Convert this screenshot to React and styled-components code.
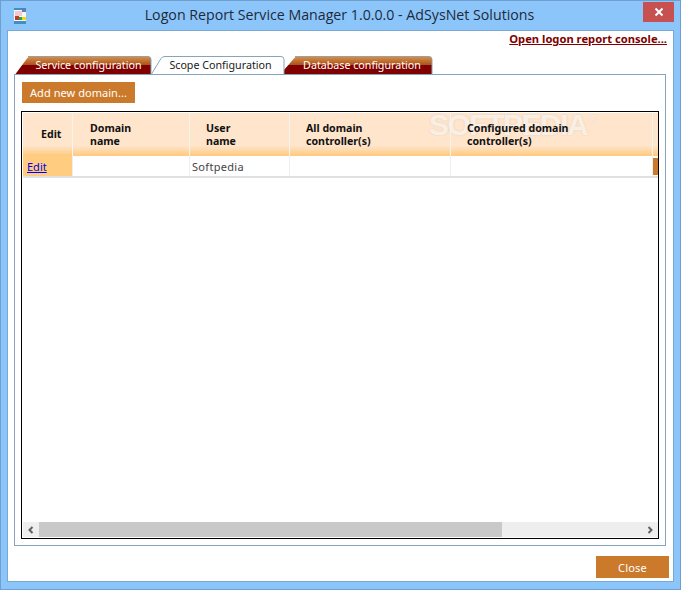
import React from 'react';
import styled, { createGlobalStyle } from 'styled-components';

const Global = createGlobalStyle`
  html, body {
    margin: 0;
    padding: 0;
    background: #8cc5fa;
  }
  * {
    box-sizing: border-box;
  }
`;

const uiFont = `"Noto Sans", "DejaVu Sans", sans-serif`;
const gridCols = '50px 117px 100px 161px 202px 1fr';

const Window = styled.div`
  width: 681px;
  height: 590px;
  display: flex;
  flex-direction: column;
  background: #8cc5fa;
  border: 1px solid #6e9fcf;
  font-family: ${uiFont};
  overflow: hidden;
`;

const TitleBar = styled.div`
  flex: 0 0 29px;
  display: flex;
  align-items: center;
  justify-content: space-between;
  padding-left: 13px;
  padding-right: 6px;
`;

const TitleText = styled.div`
  flex: 1;
  text-align: center;
  font-family: "Open Sans", "Noto Sans", sans-serif;
  font-size: 14.2px;
  color: #1d2a3a;
  padding-bottom: 2px;
  padding-left: 10px;
`;

const CloseX = styled.div`
  width: 31px;
  height: 20px;
  margin-top: -8px;
  background: #c75050;
  display: flex;
  align-items: center;
  justify-content: center;
`;

const Content = styled.div`
  flex: 1;
  margin: 0 6px 7px;
  background: #fff;
  border: 1px solid #7aa8d4;
  display: flex;
  flex-direction: column;
  padding: 0 6px 3px 6px;
`;

const LinkRow = styled.div`
  flex: 0 0 25px;
  display: flex;
  justify-content: flex-end;
  align-items: flex-start;
`;

const ConsoleLink = styled.a`
  font-family: "Noto Sans", sans-serif;
  font-weight: 700;
  font-size: 11.2px;
  line-height: 16px;
  color: #800000;
  text-decoration: underline;
`;

const TabStrip = styled.div`
  display: flex;
  height: 18px;
  padding-left: 1px;
`;

const TabItem = styled.div`
  position: relative;
  z-index: ${p => (p.$active ? 2 : 1)};
  height: 18px;
  margin-left: ${p => p.$overlap}px;
  width: ${p => p.$w}px;
  display: flex;
  align-items: center;
  justify-content: center;
  padding-left: ${p => p.$pad}px;
  font-size: 10.7px;
  color: ${p => (p.$active ? '#1a1a1a' : '#fff')};
  svg {
    position: absolute;
    left: 0;
    top: 0;
  }
  span {
    position: relative;
  }
`;

const Panel = styled.div`
  height: 472px;
  margin-right: 1px;
  border: 1px solid #86a5bc;
  padding: 7px 6px 6px 7px;
  display: flex;
  flex-direction: column;
`;

const OrangeButton = styled.div`
  width: ${p => p.$w}px;
  height: ${p => p.$h}px;
  background: #cb7a2b;
  color: #fff;
  font-size: 11px;
  letter-spacing: ${p => p.$spacing || 0}px;
  display: flex;
  align-items: center;
  justify-content: center;
`;

const Grid = styled.div`
  margin-top: 8px;
  flex: 1;
  margin-left: -1px;
  padding-left: 1px;
  border: 1px solid #000;
  display: flex;
  flex-direction: column;
  position: relative;
  overflow: hidden;
`;

const HeadRow = styled.div`
  display: grid;
  grid-template-columns: ${gridCols};
  margin-top: 1px;
  flex: 0 0 43px;
  background: linear-gradient(#ffe5cc 0, #ffe5cc 76%, #ffc97c 100%);
`;

const HeadCell = styled.div`
  position: relative;
  z-index: 1;
  border-right: 1px solid #f3f3f0;
  padding-left: ${p => p.$left}px;
  display: flex;
  align-items: center;
  font-weight: 700;
  font-size: 10.6px;
  line-height: 13px;
  color: #111;
  &:last-child {
    border-right: none;
  }
`;

const BodyRow = styled.div`
  display: grid;
  grid-template-columns: ${gridCols};
  flex: 0 0 22px;
  border-bottom: 2px solid #e0e0e0;
`;

const BodyCell = styled.div`
  border-right: 1px solid #eee;
  padding-left: ${p => p.$left || 0}px;
  display: flex;
  align-items: center;
  font-size: 11px;
  color: #444;
  letter-spacing: 0.3px;
  background: ${p => (p.$edit ? '#ffcc80' : '#fff')};
`;

const EndCell = styled.div`
  background: #fff;
  padding: 2px 0 1px 0;
  &::before {
    content: '';
    display: block;
    height: 100%;
    background: #cb7a2b;
  }
`;

const EditLink = styled.a`
  color: #0000ee;
  text-decoration: underline;
  letter-spacing: 0;
`;

const Spacer = styled.div`
  flex: 1;
`;

const ScrollBar = styled.div`
  flex: 0 0 15px;
  display: flex;
  background: #eee;
  margin-bottom: 1px;
`;

const ScrollArrow = styled.div`
  flex: 0 0 16px;
  display: flex;
  align-items: center;
  justify-content: center;
`;

const ScrollThumb = styled.div`
  flex: 0 0 463px;
  background: #c9c9c9;
`;

const Watermark = styled.div`
  position: absolute;
  left: 407px;
  top: 0;
  font-family: "Liberation Sans", sans-serif;
  font-weight: 700;
  font-size: 30px;
  line-height: 26px;
  letter-spacing: -1.5px;
  color: rgba(255, 255, 255, 0.7);
  text-shadow: 0 0 2px rgba(200, 170, 140, 0.45);
  pointer-events: none;
  sup {
    font-size: 10px;
    font-weight: 400;
    letter-spacing: 0;
    margin-left: 2px;
    vertical-align: 12px;
    line-height: 0;
  }
`;

const Footer = styled.div`
  flex: 1;
  display: flex;
  justify-content: flex-end;
  align-items: flex-start;
  padding-top: 10px;
  margin-right: -2px;
`;

const AppIcon = () => (
  <svg width="12" height="16" viewBox="0 0 12 16">
    <rect x="0" y="0" width="12" height="16" fill="#f6f6f6" />
    <rect x="0" y="0" width="8" height="2" fill="#3f8fc4" />
    <rect x="8" y="0" width="4" height="4" fill="#5a7fb5" />
    <rect x="1" y="3" width="7" height="5" fill="#f3c9cf" />
    <rect x="1" y="8" width="4" height="4" fill="#c0392b" />
    <rect x="5" y="9" width="3" height="3" fill="#2e9e3f" />
    <rect x="8" y="9" width="4" height="3" fill="#f2d90f" />
    <rect x="0" y="13" width="12" height="3" fill="#3f8fc4" />
  </svg>
);

// slanted left edge, small rounded corners on top
const tabOutline = (w, h, slant) =>
  `M0.5 ${h} L${slant - 1} 2.5 Q${slant} 0.5 ${slant + 3} 0.5 L${w - 4} 0.5 Q${w - 1} 0.5 ${w - 1} 3.5 L${w - 1} ${h}`;

const TabShape = ({ w, slant, active, id }) => (
  <svg width={w} height={18} viewBox={`0 0 ${w} 18`}>
    <defs>
      <linearGradient id={id} x1="0" y1="0" x2="0" y2="1">
        <stop offset="0" stopColor="#de8f45" />
        <stop offset="0.47" stopColor="#a8551f" />
        <stop offset="0.5" stopColor="#800000" />
        <stop offset="1" stopColor="#800000" />
      </linearGradient>
    </defs>
    <path
      d={tabOutline(w, 18, slant)}
      fill={active ? '#fff' : `url(#${id})`}
      stroke={active ? '#86a5bc' : 'none'}
    />
    {!active && (
      <path
        d={`M${slant} 0.5 L${w - 4} 0.5 Q${w - 1} 0.5 ${w - 1} 3.5 L${w - 1} 18`}
        fill="none"
        stroke="#8ba3b5"
      />
    )}
  </svg>
);

const Tab = ({ w, overlap, pad, slant, active, id, children }) => (
  <TabItem $w={w} $overlap={overlap} $pad={pad} $active={active}>
    <TabShape w={w} slant={slant} active={active} id={id} />
    <span>{children}</span>
  </TabItem>
);

const App = () => (
  <>
    <Global />
    <Window>
      <TitleBar>
        <AppIcon />
        <TitleText>Logon Report Service Manager 1.0.0.0 - AdSysNet Solutions</TitleText>
        <CloseX>
          <svg width="10" height="10" viewBox="0 0 10 10">
            <path d="M1.5 1.5 L8.5 8.5 M8.5 1.5 L1.5 8.5" stroke="#fff" strokeWidth="2" />
          </svg>
        </CloseX>
      </TitleBar>
      <Content>
        <LinkRow>
          <ConsoleLink>Open logon report console...</ConsoleLink>
        </LinkRow>
        <TabStrip>
          <Tab w={137} overlap={0} pad={10} slant={13} id="t1">Service configuration</Tab>
          <Tab w={134} overlap={-1} pad={5} slant={11} active id="t2">Scope Configuration</Tab>
          <Tab w={153} overlap={-5} pad={11} slant={15} id="t3">Database configuration</Tab>
        </TabStrip>
        <Panel>
          <OrangeButton $w={113} $h={21} $spacing={0.05}>Add new domain...</OrangeButton>
          <Grid>
            <HeadRow>
              <HeadCell $left={18}>Edit</HeadCell>
              <HeadCell $left={17}>Domain<br />name</HeadCell>
              <HeadCell $left={16}>User<br />name</HeadCell>
              <HeadCell $left={16}>All domain<br />controller(s)</HeadCell>
              <HeadCell $left={16}>Configured domain<br />controller(s)</HeadCell>
              <HeadCell />
            </HeadRow>
            <BodyRow>
              <BodyCell $edit $left={4}><EditLink>Edit</EditLink></BodyCell>
              <BodyCell />
              <BodyCell $left={2}>Softpedia</BodyCell>
              <BodyCell />
              <BodyCell />
              <EndCell />
            </BodyRow>
            <Spacer />
            <ScrollBar>
              <ScrollArrow>
                <svg width="8" height="8" viewBox="0 0 8 8">
                  <path d="M5.5 1 L2.5 4 L5.5 7" fill="none" stroke="#606060" strokeWidth="2" />
                </svg>
              </ScrollArrow>
              <ScrollThumb />
              <Spacer />
              <ScrollArrow>
                <svg width="8" height="8" viewBox="0 0 8 8">
                  <path d="M2.5 1 L5.5 4 L2.5 7" fill="none" stroke="#606060" strokeWidth="2" />
                </svg>
              </ScrollArrow>
            </ScrollBar>
            <Watermark>SOFTPEDIA<sup>®</sup></Watermark>
          </Grid>
        </Panel>
        <Footer>
          <OrangeButton $w={73} $h={22} $spacing={0.2}>Close</OrangeButton>
        </Footer>
      </Content>
    </Window>
  </>
);

export default App;
